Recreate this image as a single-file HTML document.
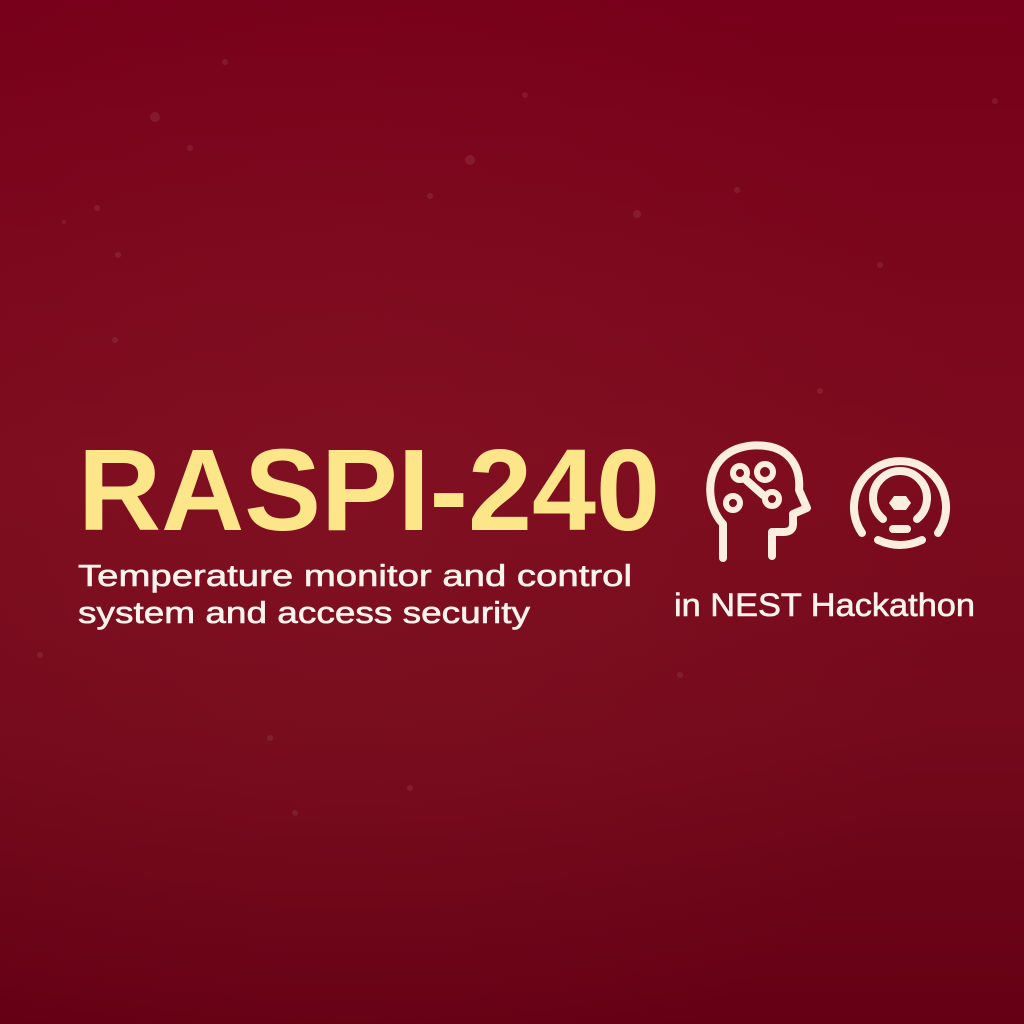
<!DOCTYPE html>
<html><head><meta charset="utf-8"><style>
html,body{margin:0;padding:0;width:1024px;height:1024px;overflow:hidden}
body{background:linear-gradient(180deg,#78001a 0%,#7c0b1e 45%,#740a1c 70%,#650014 100%)}
svg{position:absolute;left:0;top:0}
</style></head><body>
<svg width="1024" height="1024" viewBox="0 0 1024 1024">
<defs><radialGradient id="g" cx="0.35" cy="0.5" r="0.6"><stop offset="0" stop-color="#8a1a28" stop-opacity="0.35"/><stop offset="1" stop-color="#8a1a28" stop-opacity="0"/></radialGradient></defs>
<rect width="1024" height="1024" fill="url(#g)"/>
<g fill="#ffffff" opacity="0.08">
<circle cx="155" cy="117" r="5"/><circle cx="470" cy="160" r="5"/><circle cx="97" cy="208" r="3"/><circle cx="637" cy="214" r="4"/><circle cx="225" cy="62" r="3"/><circle cx="525" cy="95" r="3"/><circle cx="995" cy="101" r="3"/><circle cx="190" cy="148" r="3"/><circle cx="737" cy="190" r="3"/><circle cx="430" cy="196" r="3"/><circle cx="118" cy="255" r="3"/><circle cx="880" cy="265" r="3"/><circle cx="40" cy="655" r="3"/><circle cx="680" cy="675" r="3"/><circle cx="270" cy="738" r="3"/><circle cx="410" cy="788" r="3"/><circle cx="295" cy="813" r="3"/><circle cx="820" cy="391" r="3"/><circle cx="115" cy="340" r="3"/><circle cx="64" cy="222" r="2"/>
</g>
<text x="78" y="530" font-family="Liberation Sans, sans-serif" font-weight="bold" font-size="116" fill="#fde58a" textLength="582" lengthAdjust="spacingAndGlyphs">RASPI-240</text>
<g font-family="Liberation Sans, sans-serif" font-size="31" fill="#fbf3ec" stroke="#fbf3ec" stroke-width="0.6">
<text x="78" y="586" textLength="554" lengthAdjust="spacingAndGlyphs">Temperature monitor and control</text>
<text x="78" y="623" textLength="452" lengthAdjust="spacingAndGlyphs">system and access security</text>
<text x="674" y="616" font-size="32" textLength="301" lengthAdjust="spacingAndGlyphs">in NEST Hackathon</text>
</g>
<g fill="none" stroke="#fbeee0" stroke-width="8" stroke-linecap="round" stroke-linejoin="round">
<path d="M723 558 V524 C708 508 707 482 716 466 C728 446 752 444 766 446 C790 449 801 468 799 490 L807 508 L793 514 V524 C793 530 789 532 783 532 H772 V556"/>
<path d="M745 479 L763 495"/>
<path d="M862 533 A46 46 0 1 1 938 533"/>
<path d="M883 519 A27 27 0 1 1 917 519"/>
<path d="M878 540 Q900 550 922 540"/>
<path d="M893 529 H907"/>
</g>
<g fill="none" stroke="#fbeee0" stroke-width="6">
<circle cx="740" cy="473" r="7"/><circle cx="765" cy="472" r="8"/><circle cx="733" cy="503" r="7"/><circle cx="772" cy="499" r="7"/>
</g>
<polygon points="894,496 906,496 911,503 906,510 894,510 889,503" fill="#fbeee0"/>
</svg>
</body></html>
